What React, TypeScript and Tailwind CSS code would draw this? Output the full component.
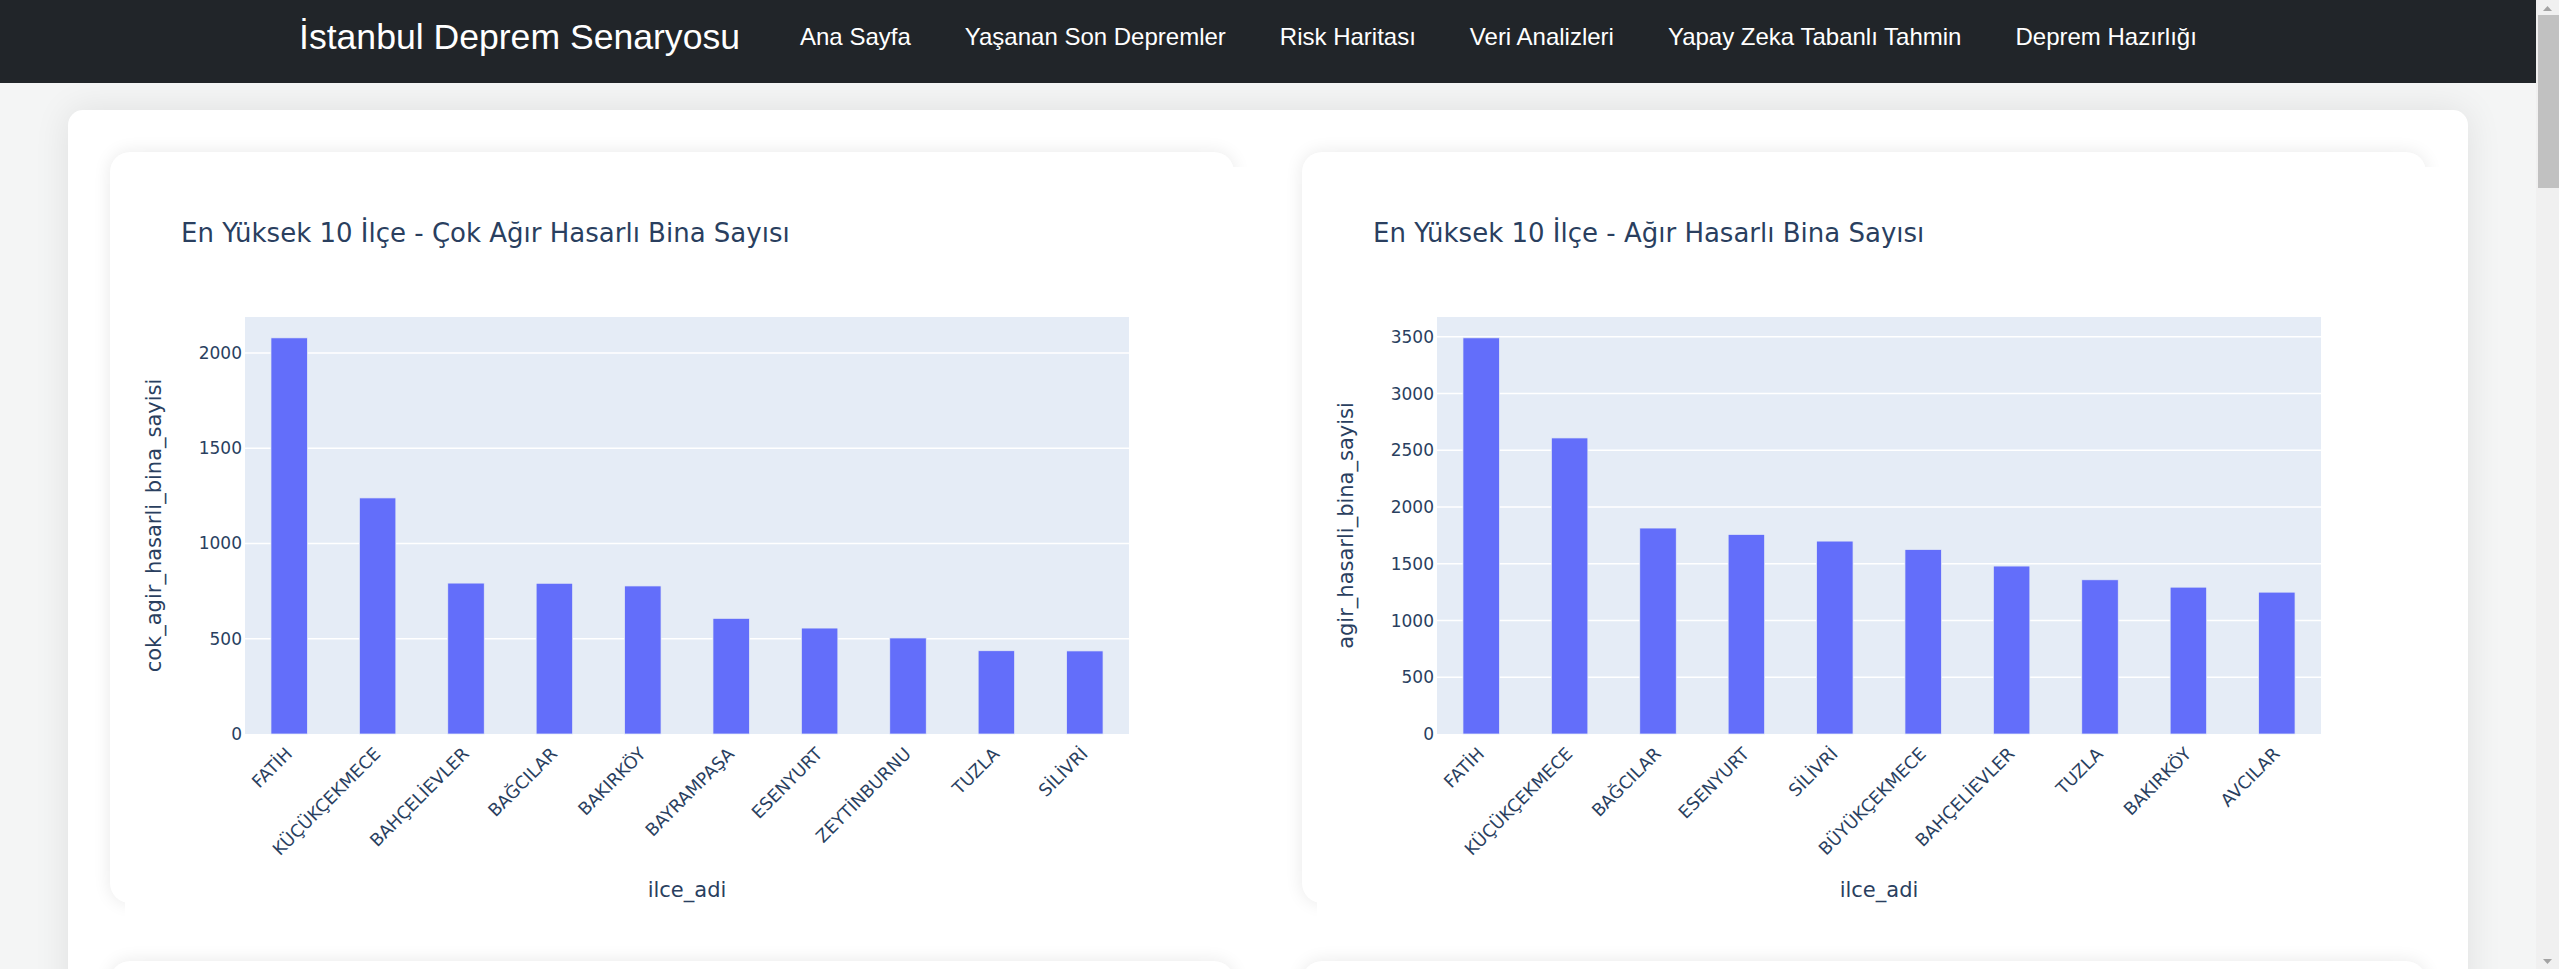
type Row = [string, number];

const links = ["Ana Sayfa", "Yaşanan Son Depremler", "Risk Haritası", "Veri Analizleri", "Yapay Zeka Tabanlı Tahmin", "Deprem Hazırlığı"];

const cokAgir: Row[] = [
  ["FATİH", 2079],
  ["KÜÇÜKÇEKMECE", 1239],
  ["BAHÇELİEVLER", 792],
  ["BAĞCILAR", 791],
  ["BAKIRKÖY", 777],
  ["BAYRAMPAŞA", 607],
  ["ESENYURT", 556],
  ["ZEYTİNBURNU", 504],
  ["TUZLA", 437],
  ["SİLİVRİ", 436],
];

const agir: Row[] = [
  ["FATİH", 3491],
  ["KÜÇÜKÇEKMECE", 2609],
  ["BAĞCILAR", 1815],
  ["ESENYURT", 1759],
  ["SİLİVRİ", 1700],
  ["BÜYÜKÇEKMECE", 1626],
  ["BAHÇELİEVLER", 1480],
  ["TUZLA", 1359],
  ["BAKIRKÖY", 1294],
  ["AVCILAR", 1250],
];

function BarChart({ title, yTitle, data, ticks }: { title: string; yTitle: string; data: Row[]; ticks: number[] }) {
  const left = 120;
  const top = 150;
  const w = 884;
  const h = 417;
  const max = Math.max(...data.map((d) => d[1])) / 0.95;
  const y = (v: number) => top + h - (v / max) * h;
  const step = w / data.length;
  const barW = 36.5;
  const ink = "#2a3f5f";

  return (
    <svg width={1124} height={751} className="block bg-white font-['DejaVu_Sans',sans-serif]">
      <text x={56} y={75} fontSize={26} fill={ink}>{title}</text>
      <rect x={left} y={top} width={w} height={h} fill="#E5ECF6" />
      {ticks.map((t) => (
        <g key={t}>
          {t > 0 && <line x1={left} x2={left + w} y1={y(t)} y2={y(t)} stroke="#fff" strokeWidth={1.5} />}
          <text x={117} y={y(t) + 6} fontSize={17} fill={ink} textAnchor="end">{t}</text>
        </g>
      ))}
      {data.map(([name, v], i) => {
        const cx = left + step * i + step / 2;
        const lx = cx + 4;
        const ly = top + h + 21;
        return (
          <g key={name}>
            <rect x={cx - barW / 2} y={y(v)} width={barW} height={top + h - y(v)} fill="#636EFA" stroke="#E5ECF6" strokeWidth={0.75} />
            <text x={lx} y={ly} fontSize={17.5} fill={ink} textAnchor="end" transform={`rotate(-45 ${lx} ${ly})`}>{name}</text>
          </g>
        );
      })}
      <text transform={`translate(36 ${top + h / 2}) rotate(-90)`} fontSize={21} fill={ink} textAnchor="middle">{yTitle}</text>
      <text x={left + w / 2} y={730} fontSize={21} fill={ink} textAnchor="middle">ilce_adi</text>
    </svg>
  );
}

function Card({ children }: { children?: React.ReactNode }) {
  return (
    <div className="h-[751px] rounded-[20px] bg-white pl-[15px] pt-[15px] shadow-[0_0_18px_rgba(0,0,0,0.09)]">
      {children}
    </div>
  );
}

export default function App() {
  return (
    <div className="flex h-[969px] overflow-hidden bg-[#f4f5f5]">
      <div className="flex min-w-0 flex-1 flex-col">
        <nav className="flex h-[83px] shrink-0 items-center bg-[#212529] pb-[10px] pl-[299px] font-['Liberation_Sans',Arial,sans-serif] text-white">
          <span className="mr-[60px] text-[35.6px] leading-[54px]">İstanbul Deprem Senaryosu</span>
          <ul className="flex gap-[54px] text-[24px] leading-[36px]">
            {links.map((l) => (
              <li key={l}>{l}</li>
            ))}
          </ul>
        </nav>
        <div className="px-[68px] pt-[27px]">
          <div className="rounded-[15px] bg-white p-[42px] shadow-[0_0_36px_rgba(0,0,0,0.09)]">
            <div className="grid grid-cols-2 gap-x-[68px] gap-y-[58px]">
              <Card>
                <BarChart title="En Yüksek 10 İlçe - Çok Ağır Hasarlı Bina Sayısı" yTitle="cok_agir_hasarli_bina_sayisi" data={cokAgir} ticks={[0, 500, 1000, 1500, 2000]} />
              </Card>
              <Card>
                <BarChart title="En Yüksek 10 İlçe - Ağır Hasarlı Bina Sayısı" yTitle="agir_hasarli_bina_sayisi" data={agir} ticks={[0, 500, 1000, 1500, 2000, 2500, 3000, 3500]} />
              </Card>
              <Card />
              <Card />
            </div>
          </div>
        </div>
      </div>
      <div className="flex w-[23px] shrink-0 flex-col bg-[#f0f0f0]">
        <div className="flex h-[15px] items-center justify-center">
          <svg width="9" height="6" viewBox="0 0 9 6"><path d="M0 6 L4.5 1 L9 6 Z" fill="#a3a3a3" /></svg>
        </div>
        <div className="ml-[2px] h-[173px] bg-[#c1c1c1]" />
        <div className="flex-1" />
        <div className="flex h-[15px] items-center justify-center">
          <svg width="9" height="6" viewBox="0 0 9 6"><path d="M0 0 L4.5 5 L9 0 Z" fill="#a3a3a3" /></svg>
        </div>
      </div>
    </div>
  );
}
